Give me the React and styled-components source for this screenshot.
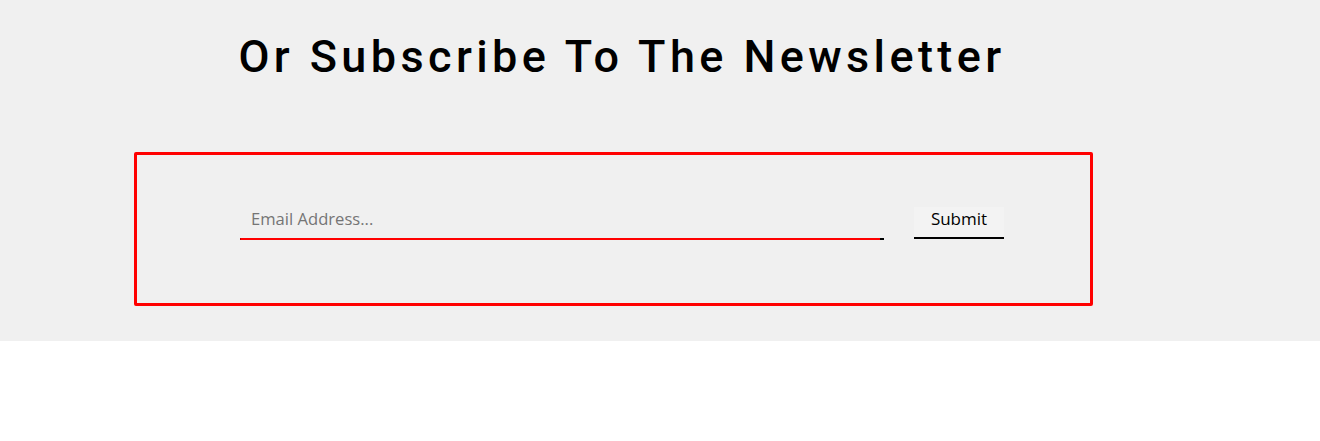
import React from 'react'
import styled, { createGlobalStyle } from 'styled-components'

const GlobalStyle = createGlobalStyle`
  body {
    margin: 0;
    background: #ffffff;
    font-family: "Open Sans", "Liberation Sans", sans-serif;
  }
`

const Section = styled.section`
  background: #f0f0f0;
  height: 341px;
  box-sizing: border-box;
  padding-top: 30px;
`

const Container = styled.div`
  width: 959px;
  margin-left: 134px;
`

const Title = styled.h2`
  margin: 0;
  padding-left: 17px;
  text-align: center;
  font-family: Roboto, "Liberation Sans", sans-serif;
  font-size: 45px;
  font-weight: 500;
  line-height: 54px;
  letter-spacing: 4.4px;
  color: #000;
`

const FormBox = styled.form`
  margin-top: 68px;
  height: 154px;
  box-sizing: border-box;
  border: 3px solid #ff0000;
  border-radius: 2px;
  padding: 44px 0 0 103px;
  display: flex;
  align-items: flex-start;
  gap: 30px;
`

const Field = styled.div`
  position: relative;
  width: 644px;
  border-bottom: 2px solid #000;
  &::after {
    content: '';
    position: absolute;
    left: 0;
    bottom: -2px;
    width: 640px;
    height: 2px;
    background: #ff0000;
    border-radius: 1px 0 0 1px;
  }
`

const Input = styled.input`
  display: block;
  width: 100%;
  box-sizing: border-box;
  border: 0;
  outline: none;
  background: transparent;
  padding: 8px 11px;
  font-family: "Open Sans", "Liberation Sans", sans-serif;
  font-size: 16.6px;
  line-height: 23px;
  color: #333;
  &::placeholder {
    color: #757575;
  }
`

const Submit = styled.button`
  margin-top: 8px;
  width: 90px;
  height: 32px;
  box-sizing: border-box;
  border: 0;
  border-bottom: 2px solid #000;
  background: #f3f3f3;
  padding: 0 0 7px;
  font-family: "Open Sans", "Liberation Sans", sans-serif;
  font-size: 17px;
  line-height: 23px;
  color: #000;
  cursor: pointer;
`

const App = () => {
  return (
    <>
      <GlobalStyle />
      <Section>
        <Container>
          <Title>Or Subscribe To The Newsletter</Title>
          <FormBox onSubmit={e => e.preventDefault()}>
            <Field>
              <Input type="email" placeholder="Email Address..." />
            </Field>
            <Submit type="submit">Submit</Submit>
          </FormBox>
        </Container>
      </Section>
    </>
  )
}

export default App
